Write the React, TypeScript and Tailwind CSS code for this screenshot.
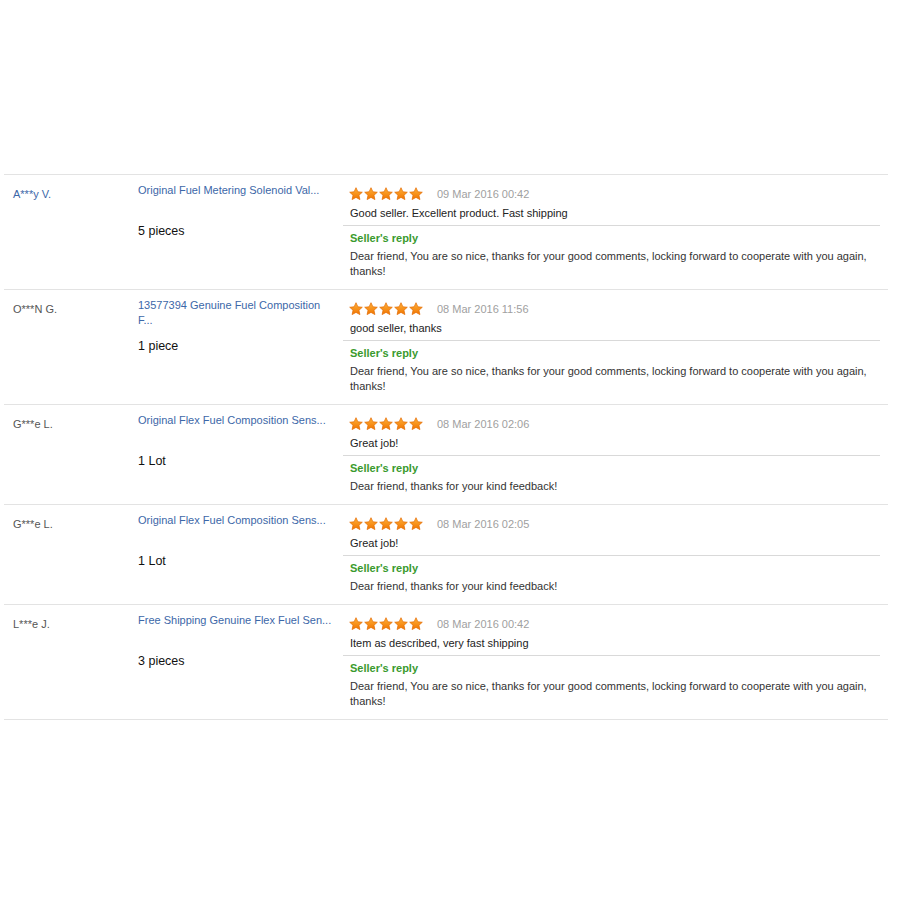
import React from 'react';

type Row = {
  name: string;
  nameBlue?: boolean;
  product: string[];
  qty: string;
  date: string;
  comment: string;
  reply: string[];
};

const rows: Row[] = [
  {
    name: 'A***y V.',
    nameBlue: true,
    product: ['Original Fuel Metering Solenoid Val...'],
    qty: '5 pieces',
    date: '09 Mar 2016 00:42',
    comment: 'Good seller. Excellent product. Fast shipping',
    reply: ['Dear friend, You are so nice, thanks for your good comments, locking forward to cooperate with you again,', 'thanks!'],
  },
  {
    name: 'O***N G.',
    product: ['13577394 Genuine Fuel Composition', 'F...'],
    qty: '1 piece',
    date: '08 Mar 2016 11:56',
    comment: 'good seller, thanks',
    reply: ['Dear friend, You are so nice, thanks for your good comments, locking forward to cooperate with you again,', 'thanks!'],
  },
  {
    name: 'G***e L.',
    product: ['Original Flex Fuel Composition Sens...'],
    qty: '1 Lot',
    date: '08 Mar 2016 02:06',
    comment: 'Great job!',
    reply: ['Dear friend, thanks for your kind feedback!'],
  },
  {
    name: 'G***e L.',
    product: ['Original Flex Fuel Composition Sens...'],
    qty: '1 Lot',
    date: '08 Mar 2016 02:05',
    comment: 'Great job!',
    reply: ['Dear friend, thanks for your kind feedback!'],
  },
  {
    name: 'L***e J.',
    product: ['Free Shipping Genuine Flex Fuel Sen...'],
    qty: '3 pieces',
    date: '08 Mar 2016 00:42',
    comment: 'Item as described, very fast shipping',
    reply: ['Dear friend, You are so nice, thanks for your good comments, locking forward to cooperate with you again,', 'thanks!'],
  },
];

const Star = ({ id }: { id: string }) => (
  <svg width="14" height="14" viewBox="0 0 24 24" className="block">
    <defs>
      <linearGradient id={id} x1="0" y1="0" x2="0" y2="1">
        <stop offset="0" stopColor="#ffb23a" />
        <stop offset="1" stopColor="#f07400" />
      </linearGradient>
    </defs>
    <path
      d="M12 1.2l3.2 7 7.6.8-5.7 5.1 1.6 7.5L12 17.8l-6.7 3.8 1.6-7.5L1.2 9l7.6-.8z"
      fill={`url(#${id})`}
      stroke="#e36a00"
      strokeWidth="1.2"
      strokeLinejoin="round"
    />
  </svg>
);

export default function App() {
  return (
    <div className="w-[897px] h-[897px] bg-white font-['Liberation_Sans',Arial,sans-serif] text-[11px] text-[#333] pt-[174px] pl-[4px]">
      <div className="w-[884px] border-t border-[#e3e3e3]">
        {rows.map((r, i) => (
          <div key={i} className="flex border-b border-[#e3e3e3]">
            {/* buyer */}
            <div className={`w-[125px] shrink-0 pl-[9px] pt-[11px] leading-[16px] ${r.nameBlue ? 'text-[#3c67a8]' : 'text-[#555]'}`}>
              {r.name}
            </div>
            {/* product */}
            <div className="w-[214px] shrink-0 pl-[9px] pt-[8px]">
              <div className="h-[30px] leading-[15px] text-[#3c67a8]">
                {r.product.map((p, j) => (
                  <div key={j} className="whitespace-nowrap">{p}</div>
                ))}
              </div>
              <div className="mt-[10px] leading-[16px] text-[12.5px] text-[#111]">{r.qty}</div>
            </div>
            {/* feedback */}
            <div className="w-[537px] shrink-0 pt-[11px] pb-[10px]">
              <div className="pl-[6px] h-[16px] flex items-center">
                <div className="flex gap-[1px]">
                  {[0, 1, 2, 3, 4].map((s) => (
                    <Star key={s} id={`g${i}${s}`} />
                  ))}
                </div>
                <span className="ml-[14px] text-[#a0a0a0] leading-[16px]">{r.date}</span>
              </div>
              <div className="pl-[7px] mt-[2px] leading-[18px] text-[#222] pb-[3px] border-b border-[#d9d9d9]">
                {r.comment}
              </div>
              <div className="pl-[7px] pt-[4px] leading-[16px] font-bold text-[#3a9a2e]">Seller's reply</div>
              <div className="pl-[7px] mt-[3px] leading-[15px] text-[#333]">
                {r.reply.map((t, j) => (
                  <div key={j} className="whitespace-nowrap">{t}</div>
                ))}
              </div>
            </div>
          </div>
        ))}
      </div>
    </div>
  );
}
